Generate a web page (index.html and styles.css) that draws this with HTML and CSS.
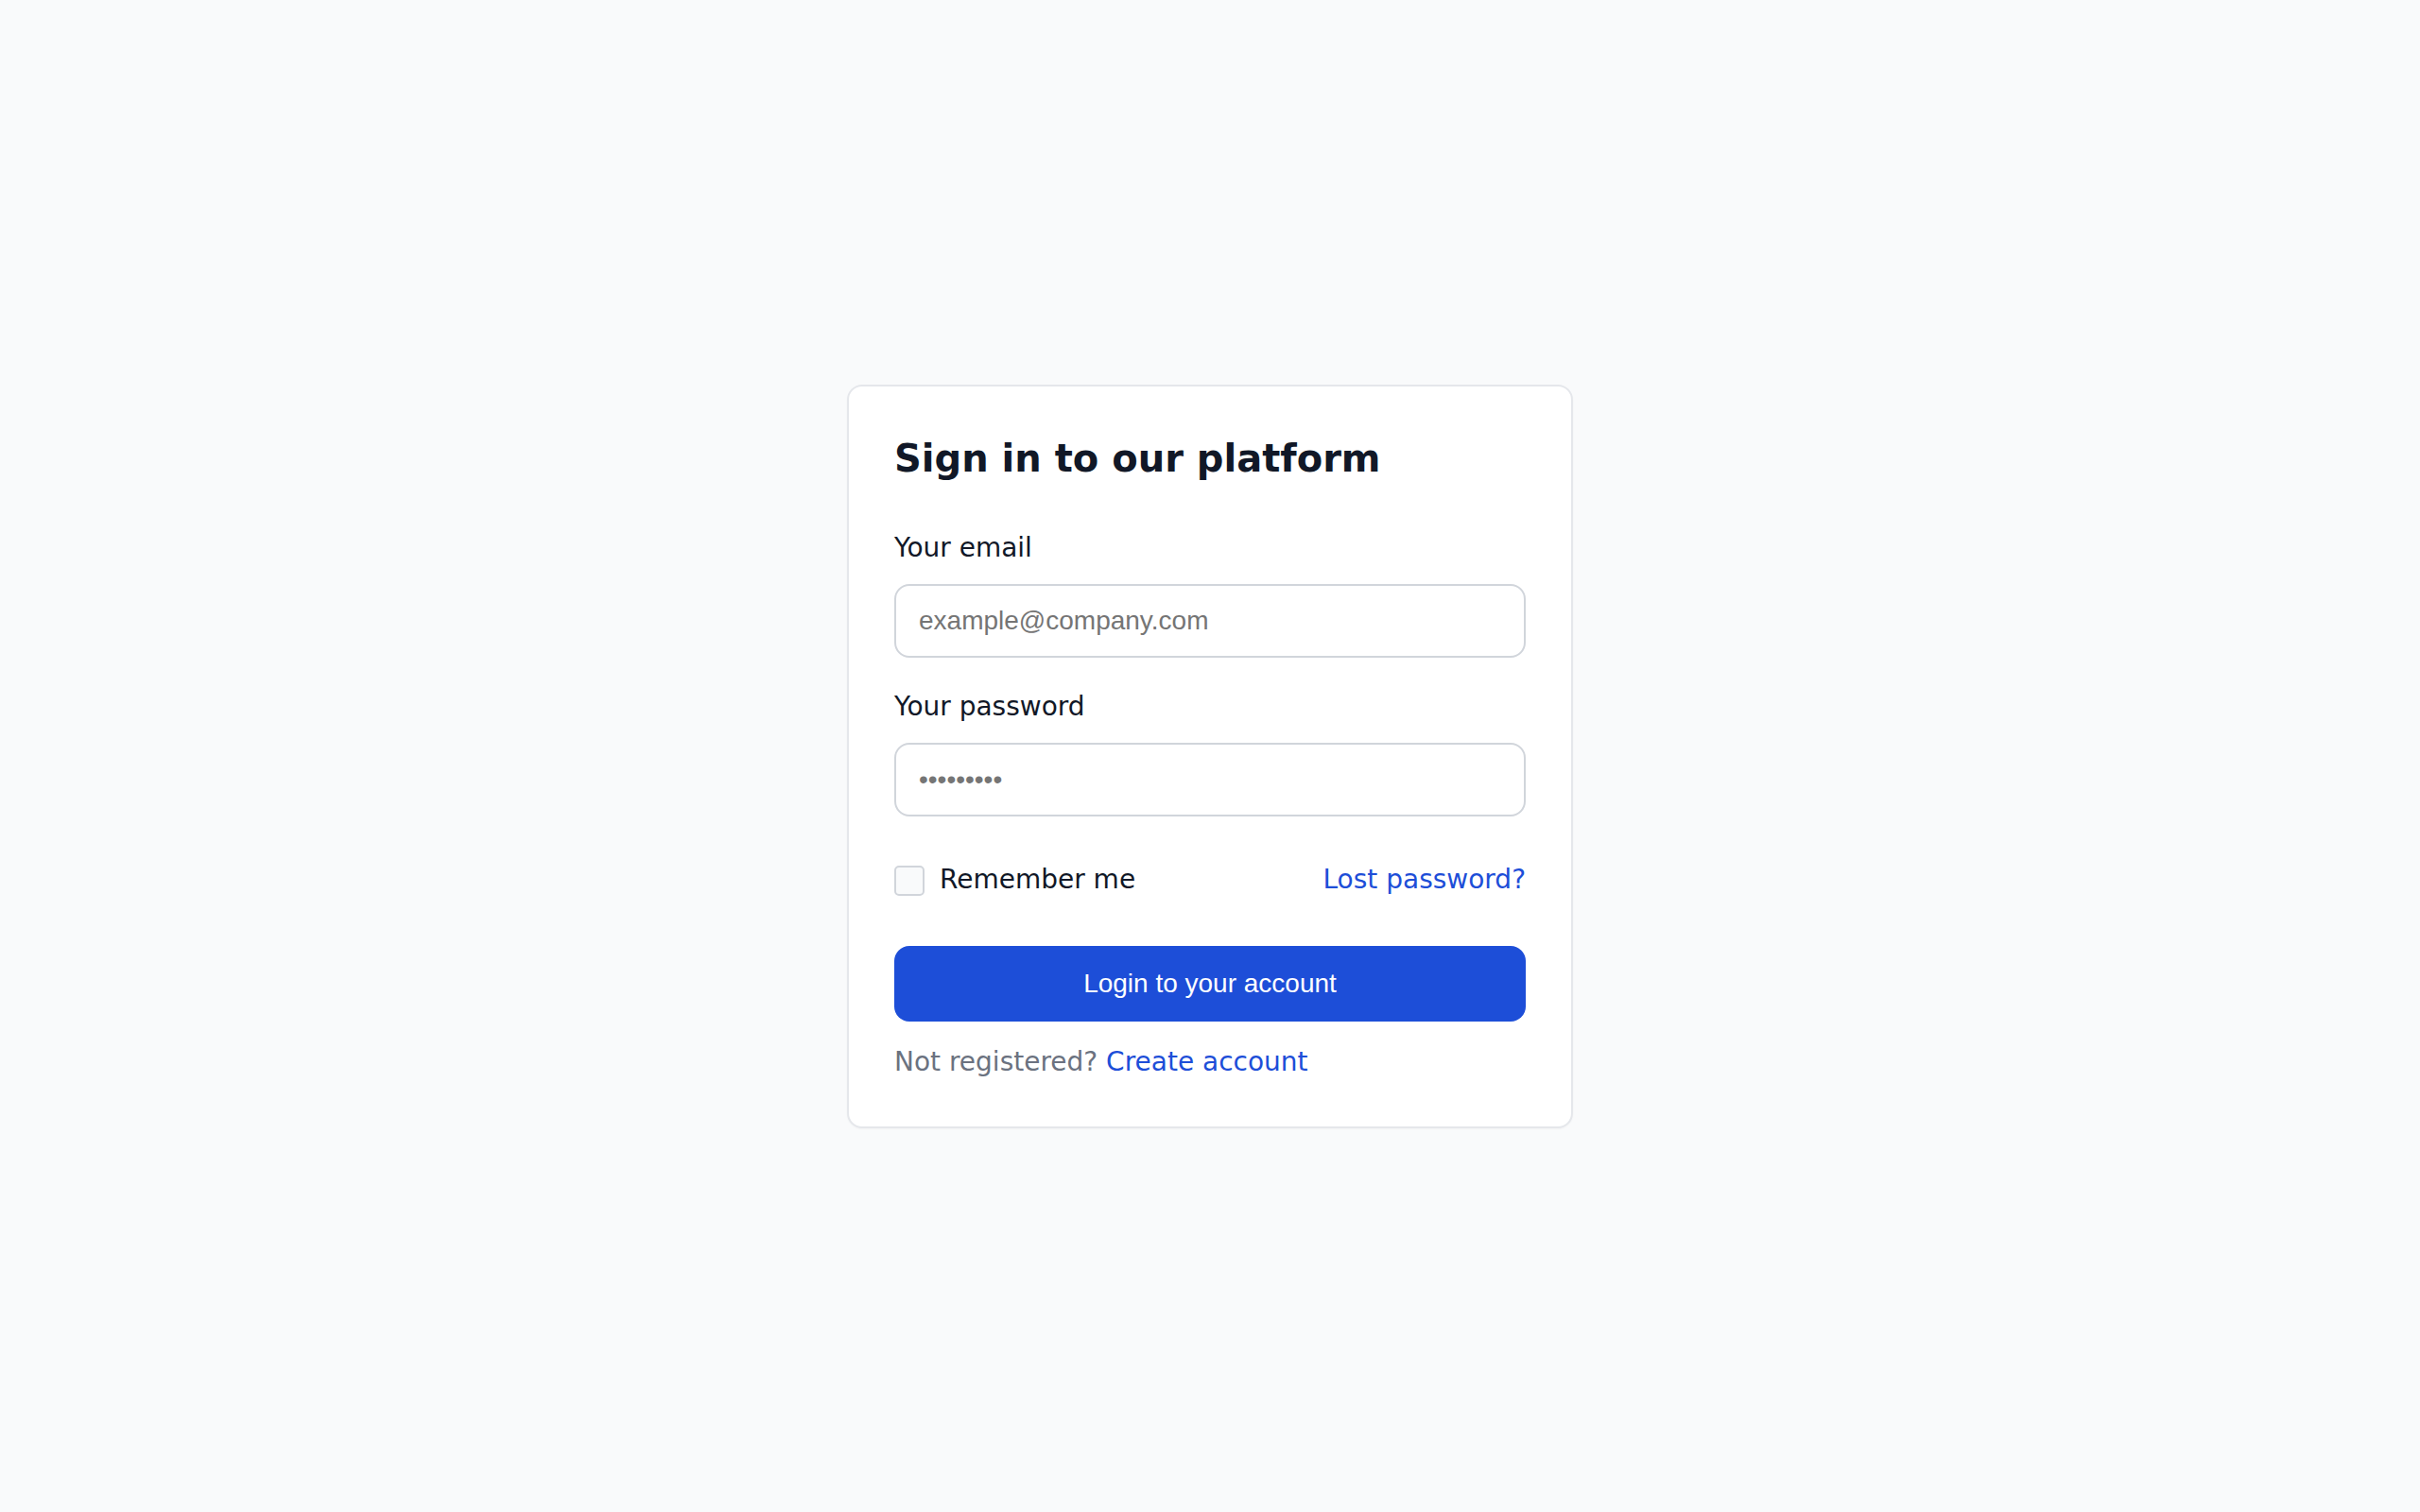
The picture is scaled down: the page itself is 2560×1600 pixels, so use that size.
FILE: index.html
```html
<!DOCTYPE html>
<html>
<head>
<title>Sign in</title>
<link rel="stylesheet" href="styles.css">
</head>
<body>
<div class="card">
<form class="login" action="#">
<h5 class="title">Sign in to our platform</h5>
<div class="field">
<label for="email">Your email</label>
<input type="email" id="email" placeholder="example@company.com">
</div>
<div class="field">
<label for="password">Your password</label>
<input type="password" id="password" placeholder="•••••••••">
</div>
<div class="row">
<label class="remember"><input type="checkbox" class="check"> Remember me</label>
<a href="#" class="link">Lost password?</a>
</div>
<button type="submit" class="btn">Login to your account</button>
<div class="footer">Not registered? <a href="#" class="link">Create account</a></div>
</form>
</div>
</body>
</html>
```

FILE: styles.css
```css
html, body { margin: 0; height: 100%; }
body {
font-family: "DejaVu Sans", sans-serif;
background-color: #f9fafb;
color: #111827;
display: flex;
align-items: center;
justify-content: center;
}
.card {
box-sizing: border-box;
width: 768px;
padding: 48px;
background-color: #fff;
border: 2px solid #e5e7eb;
border-radius: 16px;
box-shadow: 0 1px 2px 0 rgba(0,0,0,0.03);
}
.login { display: flex; flex-direction: column; }
.title {
margin: 0 0 47px 0;
font-size: 40px;
line-height: 56px;
font-weight: 700;
color: #111827;
}
.field { margin-bottom: 32px; }
.field:nth-of-type(2) { margin-bottom: 47px; }
.field label {
display: block;
font-size: 28px;
line-height: 40px;
margin-bottom: 18px;
color: #111827;
}
.field input {
box-sizing: border-box;
display: block;
width: 100%;
height: 78px;
padding: 0 24px;
font-family: "Liberation Sans", Arial, sans-serif;
font-size: 28px;
color: #111827;
background-color: #fff;
border: 2px solid #d1d5db;
border-radius: 16px;
outline: none;
}
.field input::placeholder { color: #757575; }
.row {
display: flex;
align-items: center;
justify-content: space-between;
height: 40px;
font-size: 28px;
line-height: 40px;
margin-bottom: 50px;
}
.remember { display: flex; align-items: center; color: #111827; }
.check {
-webkit-appearance: none;
appearance: none;
box-sizing: border-box;
width: 32px;
height: 32px;
margin: 2px 16px 0 0;
background-color: #f9fafb;
border: 2px solid #d1d5db;
border-radius: 5px;
}
.link { color: #1d4ed8; text-decoration: none; }
.btn {
height: 80px;
width: 100%;
border: none;
border-radius: 16px;
background-color: #1d4ed8;
color: #fff;
font-family: "Liberation Sans", Arial, sans-serif;
font-size: 28px;
cursor: pointer;
}
.footer {
margin-top: 23px;
font-size: 28px;
line-height: 40px;
color: #6b7280;
}
```
